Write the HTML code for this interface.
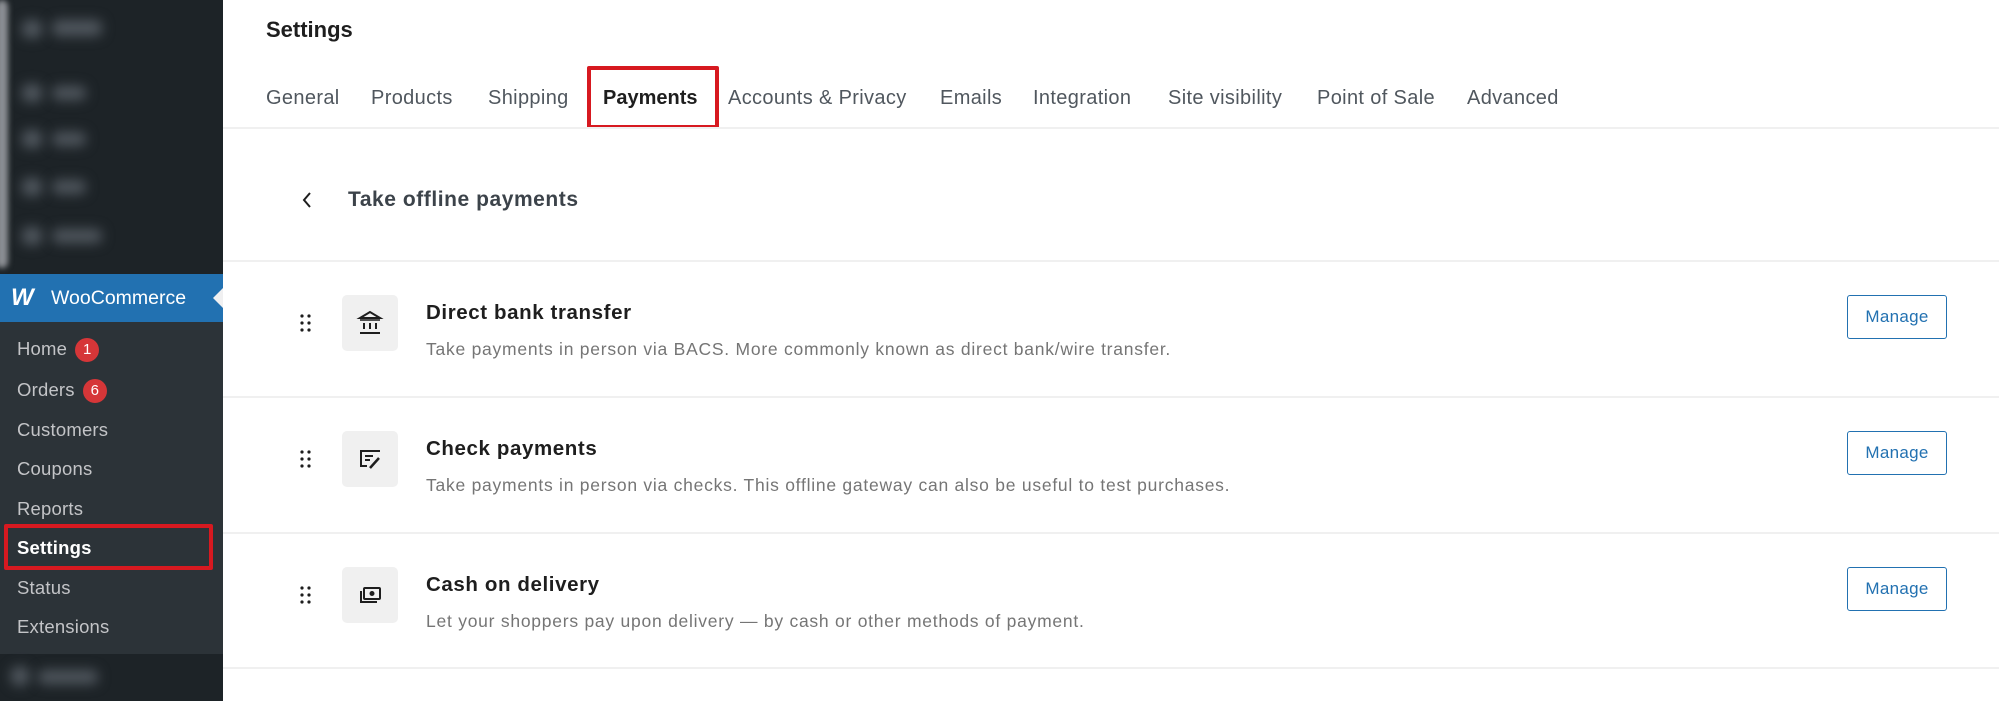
<!DOCTYPE html>
<html><head><meta charset="utf-8"><style>
*{margin:0;padding:0;box-sizing:border-box}
body{width:1999px;height:701px;overflow:hidden;background:#fff;font-family:"Liberation Sans",sans-serif;position:relative}
.sb{position:absolute;left:0;top:0;width:223px;height:701px;background:#1d2327;overflow:hidden}
.blur{position:absolute;background:#50575e;filter:blur(6px);border-radius:6px}
.woo{position:absolute;left:0;top:274px;width:223px;height:48px;background:#2271b1;color:#fff;font-size:19.5px}
.sub{position:absolute;left:0;top:322px;width:223px;height:332px;background:#2c3338}
.it{position:absolute;left:17px;color:#c3c4c7;font-size:18.5px;line-height:22px;letter-spacing:0.2px}
.badge{display:inline-block;width:24px;height:24px;border-radius:12px;background:#d63638;color:#fff;font-size:15px;text-align:center;line-height:24px;margin-left:8px;vertical-align:1px;letter-spacing:0}
.t{position:absolute;font-size:20px;letter-spacing:0.35px;color:#50575e;top:87px}
.row{position:absolute;left:223px;right:0;border-bottom:2px solid #f0f0f0}
.dots{position:absolute;left:300px;width:12px;height:18px}
.ib{position:absolute;left:342px;width:56px;height:56px;background:#f0f0f0;border-radius:5px}
.ib svg{position:absolute;left:14px;top:14px}
.ti{position:absolute;left:426px;font-size:20.5px;letter-spacing:0.6px;font-weight:bold;color:#1e1e1e}
.de{position:absolute;left:426px;font-size:17.5px;letter-spacing:0.75px;color:#757575}
.btn{position:absolute;left:1847px;width:100px;height:44px;border:1.5px solid #2271b1;border-radius:3px;color:#2271b1;font-size:17px;letter-spacing:0.3px;text-align:center;line-height:41px}
</style></head><body>
<div class="sb">
 <div class="blur" style="left:-4px;top:0;width:12px;height:268px;background:#8c8f94;filter:blur(3px)"></div>
 <div class="blur" style="left:22px;top:20px;width:20px;height:18px"></div>
 <div class="blur" style="left:52px;top:20px;width:50px;height:16px"></div>
 <div class="blur" style="left:22px;top:84px;width:20px;height:18px"></div>
 <div class="blur" style="left:52px;top:86px;width:34px;height:14px"></div>
 <div class="blur" style="left:22px;top:130px;width:20px;height:18px"></div>
 <div class="blur" style="left:52px;top:132px;width:34px;height:14px"></div>
 <div class="blur" style="left:22px;top:178px;width:20px;height:18px"></div>
 <div class="blur" style="left:52px;top:180px;width:34px;height:14px"></div>
 <div class="blur" style="left:22px;top:227px;width:20px;height:18px"></div>
 <div class="blur" style="left:52px;top:229px;width:50px;height:14px"></div>
 <div class="woo"><span style="position:absolute;left:11px;top:10px;font-weight:bold;font-style:italic;font-size:24px;letter-spacing:-2px">W</span><span style="position:absolute;left:51px;top:13px">WooCommerce</span></div>
 <div style="position:absolute;left:213px;top:288px;width:0;height:0;border-top:10px solid transparent;border-bottom:10px solid transparent;border-right:10px solid #f0f0f1"></div>
 <div class="sub"></div>
 <div class="it" style="top:338px">Home<span class="badge">1</span></div>
 <div class="it" style="top:379px">Orders<span class="badge">6</span></div>
 <div class="it" style="top:419px">Customers</div>
 <div class="it" style="top:458px">Coupons</div>
 <div class="it" style="top:498px">Reports</div>
 <div class="it" style="top:537px;color:#fff;font-weight:bold">Settings</div>
 <div style="position:absolute;left:4px;top:524px;width:209px;height:46px;border:4px solid #d71920;border-radius:2px"></div>
 <div class="it" style="top:577px">Status</div>
 <div class="it" style="top:616px">Extensions</div>
 <div class="blur" style="left:10px;top:666px;width:20px;height:20px;border-radius:10px"></div>
 <div class="blur" style="left:38px;top:670px;width:60px;height:14px"></div>
</div>
<div style="position:absolute;left:266px;top:17px;font-size:22px;color:#1e1e1e;font-weight:bold">Settings</div>
<div class="t" style="left:266px">General</div>
<div class="t" style="left:371px">Products</div>
<div class="t" style="left:488px">Shipping</div>
<div class="t" style="left:603px;color:#1e1e1e;font-weight:bold;letter-spacing:0">Payments</div>
<div class="t" style="left:728px">Accounts &amp; Privacy</div>
<div class="t" style="left:940px">Emails</div>
<div class="t" style="left:1033px">Integration</div>
<div class="t" style="left:1168px">Site visibility</div>
<div class="t" style="left:1317px">Point of Sale</div>
<div class="t" style="left:1467px">Advanced</div>
<div style="position:absolute;left:587px;top:66px;width:132px;height:63px;border:4px solid #d71920;border-radius:2px"></div>
<div style="position:absolute;left:223px;right:0;top:127px;height:2px;background:#f0f0f0"></div>
<svg style="position:absolute;left:300px;top:190px" width="14" height="20" viewBox="0 0 14 20"><path d="M10 3 L4 10 L10 17" fill="none" stroke="#1e1e1e" stroke-width="2"/></svg>
<div style="position:absolute;left:348px;top:188px;font-size:21px;letter-spacing:0.55px;color:#3c434a;font-weight:bold">Take offline payments</div>
<div class="row" style="top:129px;height:133px"></div>
<div class="row" style="top:262px;height:136px"></div>
<div class="row" style="top:398px;height:136px"></div>
<div class="row" style="top:534px;height:135px"></div>

<svg class="dots" style="top:314px" viewBox="0 0 12 18"><g fill="#1e1e1e"><circle cx="2" cy="2" r="1.6"/><circle cx="9" cy="2" r="1.6"/><circle cx="2" cy="9" r="1.6"/><circle cx="9" cy="9" r="1.6"/><circle cx="2" cy="16" r="1.6"/><circle cx="9" cy="16" r="1.6"/></g></svg>
<div class="ib" style="top:295px"><svg width="28" height="28" viewBox="0 0 28 28"><path d="M14 3 L4 9 L24 9 Z" fill="none" stroke="#1e1e1e" stroke-width="2"/><path d="M4 11h20" stroke="#1e1e1e" stroke-width="1.5"/><path d="M8 14v6M14 14v6M20 14v6" stroke="#1e1e1e" stroke-width="2"/><path d="M4 24h20" stroke="#1e1e1e" stroke-width="2"/></svg></div>
<div class="ti" style="top:301px">Direct bank transfer</div>
<div class="de" style="top:339px">Take payments in person via BACS. More commonly known as direct bank/wire transfer.</div>
<div class="btn" style="top:295px">Manage</div>

<svg class="dots" style="top:450px" viewBox="0 0 12 18"><g fill="#1e1e1e"><circle cx="2" cy="2" r="1.6"/><circle cx="9" cy="2" r="1.6"/><circle cx="2" cy="9" r="1.6"/><circle cx="9" cy="9" r="1.6"/><circle cx="2" cy="16" r="1.6"/><circle cx="9" cy="16" r="1.6"/></g></svg>
<div class="ib" style="top:431px"><svg width="28" height="28" viewBox="0 0 28 28"><path d="M24 6 H5 V21 H11" fill="none" stroke="#1e1e1e" stroke-width="2"/><path d="M9 11h8M9 15h5" stroke="#1e1e1e" stroke-width="2"/><path d="M14 23 L23 13" stroke="#1e1e1e" stroke-width="2.5"/></svg></div>
<div class="ti" style="top:437px">Check payments</div>
<div class="de" style="top:475px">Take payments in person via checks. This offline gateway can also be useful to test purchases.</div>
<div class="btn" style="top:431px">Manage</div>

<svg class="dots" style="top:586px" viewBox="0 0 12 18"><g fill="#1e1e1e"><circle cx="2" cy="2" r="1.6"/><circle cx="9" cy="2" r="1.6"/><circle cx="2" cy="9" r="1.6"/><circle cx="9" cy="9" r="1.6"/><circle cx="2" cy="16" r="1.6"/><circle cx="9" cy="16" r="1.6"/></g></svg>
<div class="ib" style="top:567px"><svg width="28" height="28" viewBox="0 0 28 28"><rect x="8" y="7" width="16" height="11" rx="1" fill="none" stroke="#1e1e1e" stroke-width="2"/><circle cx="16" cy="12.5" r="2.5" fill="#1e1e1e"/><path d="M5 10 V21 H21" fill="none" stroke="#1e1e1e" stroke-width="2"/></svg></div>
<div class="ti" style="top:573px">Cash on delivery</div>
<div class="de" style="top:611px">Let your shoppers pay upon delivery — by cash or other methods of payment.</div>
<div class="btn" style="top:567px">Manage</div>
</body></html>
